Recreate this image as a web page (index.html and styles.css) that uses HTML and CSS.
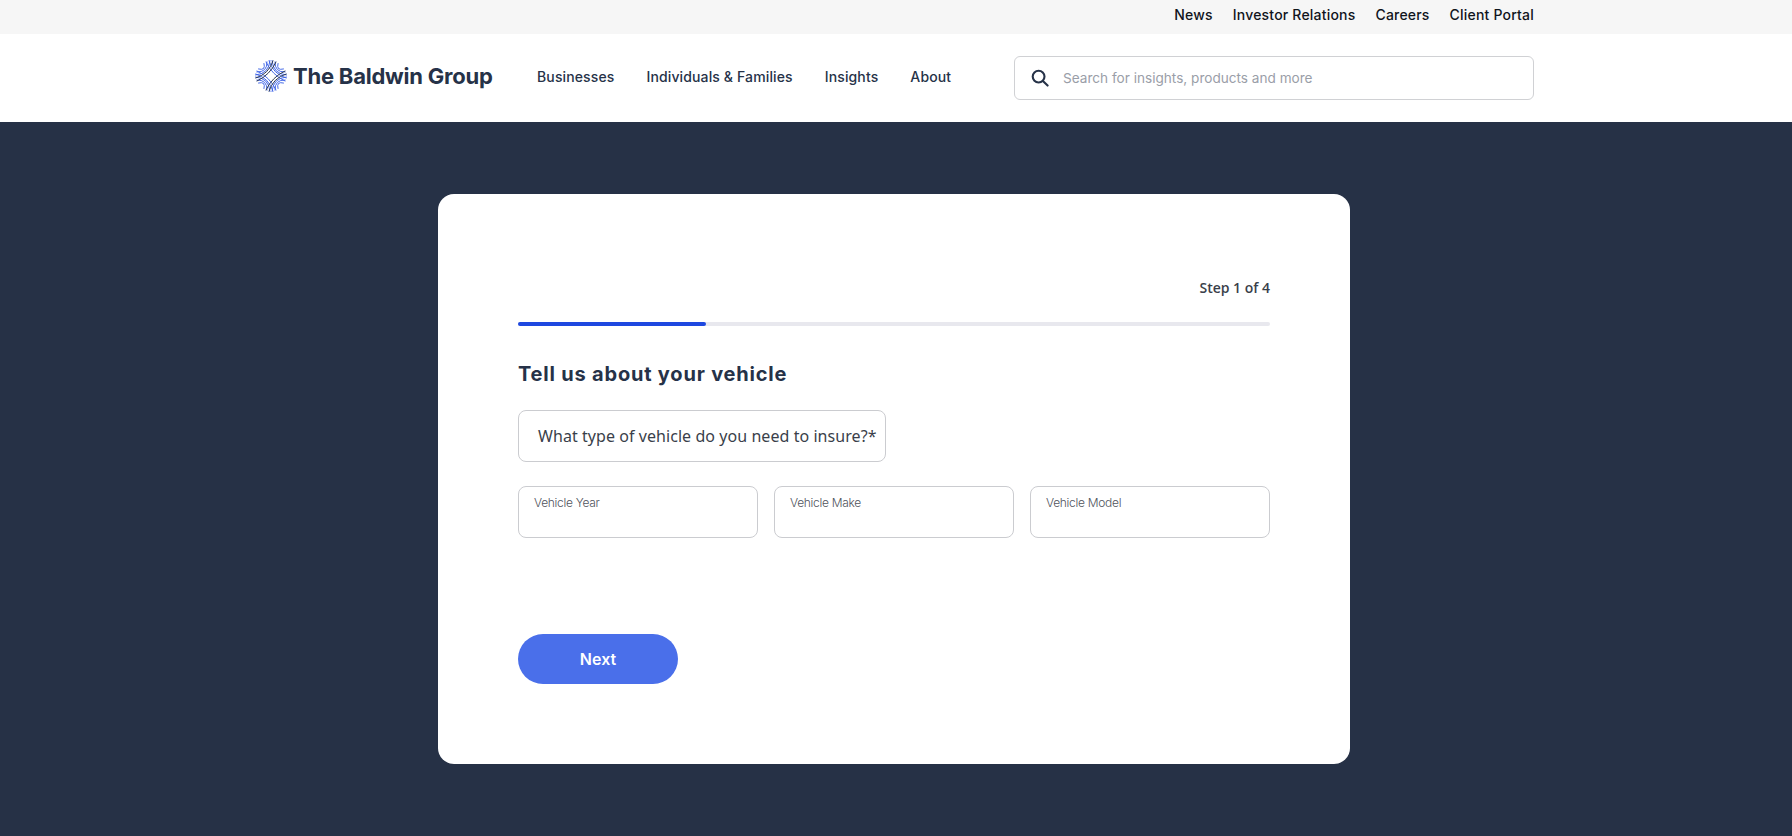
FILE: index.html
```html
<!DOCTYPE html>
<html lang="en">
<head>
<meta charset="utf-8">
<title>The Baldwin Group</title>
<link rel="stylesheet" href="styles.css">
</head>
<body>
<div class="topbar">
  <nav class="toplinks">
    <a href="#">News</a>
    <a href="#">Investor Relations</a>
    <a href="#">Careers</a>
    <a href="#">Client Portal</a>
  </nav>
</div>
<header class="header">
  <a class="logo" href="#">
    <svg class="logo-mark" viewBox="0 0 32 32" fill="none" stroke-width="0.95" stroke-linecap="round">
      <defs>
        <g id="arcs-a">
          <path d="M15 .5Q14 14 .5 15"/>
          <path d="M12 1.8Q12.5 12.5 1.8 12"/>
          <path d="M9 3.5Q11 11 3.5 9"/>
        </g>
        <g id="arcs-b">
          <path d="M21 2Q15 15 2 21"/>
          <path d="M18 .8Q14 14 .8 18"/>
        </g>
      </defs>
      <g stroke="#3d63e6">
        <use href="#arcs-a"/>
        <use href="#arcs-a" transform="rotate(90 16 16)"/>
        <use href="#arcs-a" transform="rotate(180 16 16)"/>
        <use href="#arcs-a" transform="rotate(270 16 16)"/>
        <use href="#arcs-b" transform="rotate(90 16 16)"/>
        <use href="#arcs-b" transform="rotate(270 16 16)"/>
      </g>
      <g stroke="#263248">
        <use href="#arcs-b"/>
        <use href="#arcs-b" transform="rotate(180 16 16)"/>
      </g>
    </svg>
    <span class="logo-text">The Baldwin Group</span>
  </a>
  <nav class="mainnav">
    <a href="#">Businesses</a>
    <a href="#">Individuals &amp; Families</a>
    <a href="#">Insights</a>
    <a href="#">About</a>
  </nav>
  <div class="search">
    <svg class="search-icon" viewBox="0 0 18 18" fill="none" stroke="#263248" stroke-width="2.1">
      <circle cx="7.6" cy="7.6" r="5.9"/>
      <path d="M11.9 11.9L16.6 16.6" stroke-linecap="round"/>
    </svg>
    <span class="search-text">Search for insights, products and more</span>
  </div>
</header>
<main class="main">
  <section class="card">
    <div class="step">Step 1 of 4</div>
    <div class="progress"><div class="progress-fill"></div></div>
    <h1 class="title">Tell us about your vehicle</h1>
    <div class="select-field">What type of vehicle do you need to insure?*</div>
    <div class="row">
      <div class="field">Vehicle Year</div>
      <div class="field">Vehicle Make</div>
      <div class="field">Vehicle Model</div>
    </div>
    <button class="next" type="button">Next</button>
  </section>
</main>
</body>
</html>
```
FILE: styles.css
```css
* { box-sizing: border-box; }
html, body { margin: 0; height: 100%; }
body {
  background: #263146;
  font-family: Inter, "Liberation Sans", sans-serif;
  color: #263248;
  overflow: hidden;
}
a { text-decoration: none; color: inherit; }

.topbar {
  height: 34px;
  background-color: #f6f6f6;
  background-image: radial-gradient(#eeeeee 0.6px, transparent 0.7px);
  background-size: 4px 4px;
  display: flex;
  justify-content: flex-end;
  align-items: center;
  padding: 0 258px 4px 0;
}
.toplinks { display: flex; gap: 20px; }
.toplinks a { font-size: 14px; font-weight: 500; letter-spacing: 0.2px; color: #10141c; line-height: 20px; }

.header {
  height: 88px;
  background: #fff;
  display: flex;
  align-items: center;
  padding: 0 258px 0 255px;
}
.logo { display: flex; align-items: center; gap: 6px; width: 282px; flex: none; margin-top: -4px; }
.logo-mark { width: 32px; height: 32px; flex: none; }
.logo-text { font-size: 22px; font-weight: 700; letter-spacing: -0.22px; color: #263248; white-space: nowrap; margin-top: -1px; }

.mainnav { display: flex; gap: 32px; flex: none; margin-top: -4px; }
.mainnav a { font-size: 14px; font-weight: 500; letter-spacing: 0.13px; color: #263248; white-space: nowrap; }

.search {
  margin-left: auto;
  width: 520px;
  height: 44px;
  border: 1px solid #d0d1d4;
  border-radius: 6px;
  display: flex;
  align-items: center;
  padding-left: 16px;
  gap: 14px;
  margin-top: -1px;
}
.search-icon { width: 18px; height: 18px; flex: none; }
.search-text { font-size: 13.6px; color: #9a9ea8; }

.main { display: flex; justify-content: center; padding: 72px 4px 0 0; }
.card {
  width: 912px;
  height: 570px;
  background: #fff;
  border-radius: 16px;
  padding: 84px 80px 0;
}
.step {
  text-align: right;
  font-family: "Open Sans", sans-serif;
  font-size: 14px;
  font-weight: 600;
  line-height: 20px;
  color: #3a3f4a;
}
.progress { height: 4px; margin-top: 24px; background: #e8e8ee; border-radius: 2px; }
.progress-fill { width: 25%; height: 100%; background: #1e48e0; border-radius: 2px; }
.title {
  margin: 35px 0 0;
  font-family: Inter, sans-serif;
  font-size: 20px;
  line-height: 26px;
  font-weight: 700;
  letter-spacing: 0.8px;
  color: #263248;
}
.select-field {
  width: 368px;
  height: 52px;
  margin-top: 23px;
  border: 1px solid #cbccd0;
  border-radius: 8px;
  padding-left: 19px;
  display: flex;
  align-items: center;
  font-family: "Noto Sans", sans-serif;
  font-size: 16px;
  letter-spacing: 0.06px;
  color: #3a3f4a;
  white-space: nowrap;
}
.row { display: grid; grid-template-columns: repeat(3, 1fr); gap: 16px; margin-top: 24px; }
.field {
  height: 52px;
  border: 1px solid #cbccd0;
  border-radius: 8px;
  padding: 8px 15px;
  font-size: 12px;
  font-weight: 300;
  line-height: 16px;
  color: #50535c;
  letter-spacing: -0.3px;
}
.next {
  display: block;
  width: 160px;
  height: 50px;
  margin-top: 96px;
  background: #4a6fea;
  color: #fff;
  border: 0;
  border-radius: 25px;
  font-family: Inter, sans-serif;
  font-size: 16px;
  font-weight: 600;
}
```
